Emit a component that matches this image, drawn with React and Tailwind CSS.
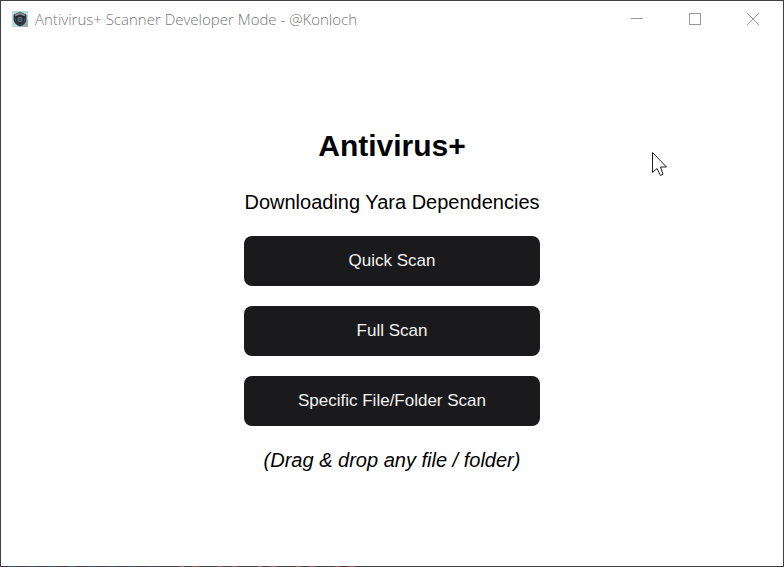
const scans = ["Quick Scan", "Full Scan", "Specific File/Folder Scan"];

function ShieldIcon() {
  return (
    <svg viewBox="0 0 16 16" className="h-4 w-4 shrink-0" aria-hidden="true">
      <rect width="16" height="16" fill="#b4dcde" />
      <path d="M9 16 16 8v8z" fill="#93adb0" />
      <path d="M8 .8 14.4 3.8v4.4c0 3.200-2.400 5.800-6.400 7.400C4 14 1.600 11.400 1.600 8.200V3.800z" fill="#24272e" />
      <path d="M8 1.300 13.200 3.800v1.600L8 3.400 2.800 5.400V3.800z" fill="#8b9197" />
      <path d="M3 6.800c0 3.200 1.400 5.200 5 7.200 3.600-2 5-4 5-7.200" fill="none" stroke="#59616a" strokeWidth="0.800" />
      <path d="M8 4.800 11.400 6.200v2.600c0 1.800-1.400 3-3.400 4-2-1-3.400-2.200-3.400-4V6.200z" fill="#252b35" />
      <rect x="6" y="6.500" width="4" height="4" rx="1" fill="#3a4a5c" stroke="#74879a" strokeWidth="0.800" />
    </svg>
  );
}

function WindowButton({ label, children }) {
  return (
    <button type="button" aria-label={label} className="flex h-9 w-[58px] items-center justify-center">
      <svg viewBox="0 0 12 12" className="h-3 w-3" fill="none" stroke="#999999" shapeRendering="crispEdges" aria-hidden="true">
        {children}
      </svg>
    </button>
  );
}

function Cursor() {
  return (
    <svg viewBox="0 0 16 25" className="absolute left-[651px] top-[150px] h-[25px] w-4" aria-hidden="true">
      <path
        d="M.5 1.500V21.500L5 17.500 8.500 24.500 11 23.200 8.500 16H14.500z"
        fill="#ffffff"
        stroke="#1c1c28"
        strokeWidth="1"
      />
    </svg>
  );
}

function FrameTint() {
  return (
    <svg className="absolute -bottom-px left-0 h-px w-[362px]" shapeRendering="crispEdges" aria-hidden="true">
      <path d="M8 .5H152" stroke="#2f5f9e" strokeDasharray="6 14" />
      <path d="M178 .5H362" stroke="#a8504c" strokeDasharray="5 8 7 19" />
    </svg>
  );
}

export default function App() {
  return (
    <div className="relative flex min-h-screen flex-col border border-[#413f42] bg-white font-['Liberation_Sans',Arial,sans-serif] text-black">
      <header className="flex h-9 items-center justify-between pl-[11px] pr-px">
        <div className="flex items-center gap-[7px]">
          <ShieldIcon />
          <span className="font-['Open_Sans','Noto_Sans',sans-serif] text-[15px] font-light leading-5 text-[#777777]">
            Antivirus+ Scanner Developer Mode - @Konloch
          </span>
        </div>
        <div className="flex">
          <WindowButton label="Minimize">
            <path d="M0 5.500H12" />
          </WindowButton>
          <WindowButton label="Maximize">
            <path d="M.5 .5H11.500V11.500H.5z" />
          </WindowButton>
          <WindowButton label="Close">
            <path d="M0 0 12 12M12 0 0 12" shapeRendering="auto" />
          </WindowButton>
        </div>
      </header>

      <main className="flex grow flex-col items-center justify-center pb-[6px]">
        <div className="flex w-[296px] flex-col gap-5 text-center text-xl leading-7">
          <h1 className="text-[30px] font-bold leading-[44px]">Antivirus+</h1>
          <p className="whitespace-nowrap">Downloading Yara Dependencies</p>
          {scans.map((label) => (
            <button
              key={label}
              type="button"
              className="h-[50px] rounded-lg bg-[#1a1a1c] text-[17px] leading-6 text-[#f2f2f2]"
            >
              {label}
            </button>
          ))}
          <p className="italic">(Drag &amp; drop any file / folder)</p>
        </div>
      </main>
      <Cursor />
      <FrameTint />
    </div>
  );
}
